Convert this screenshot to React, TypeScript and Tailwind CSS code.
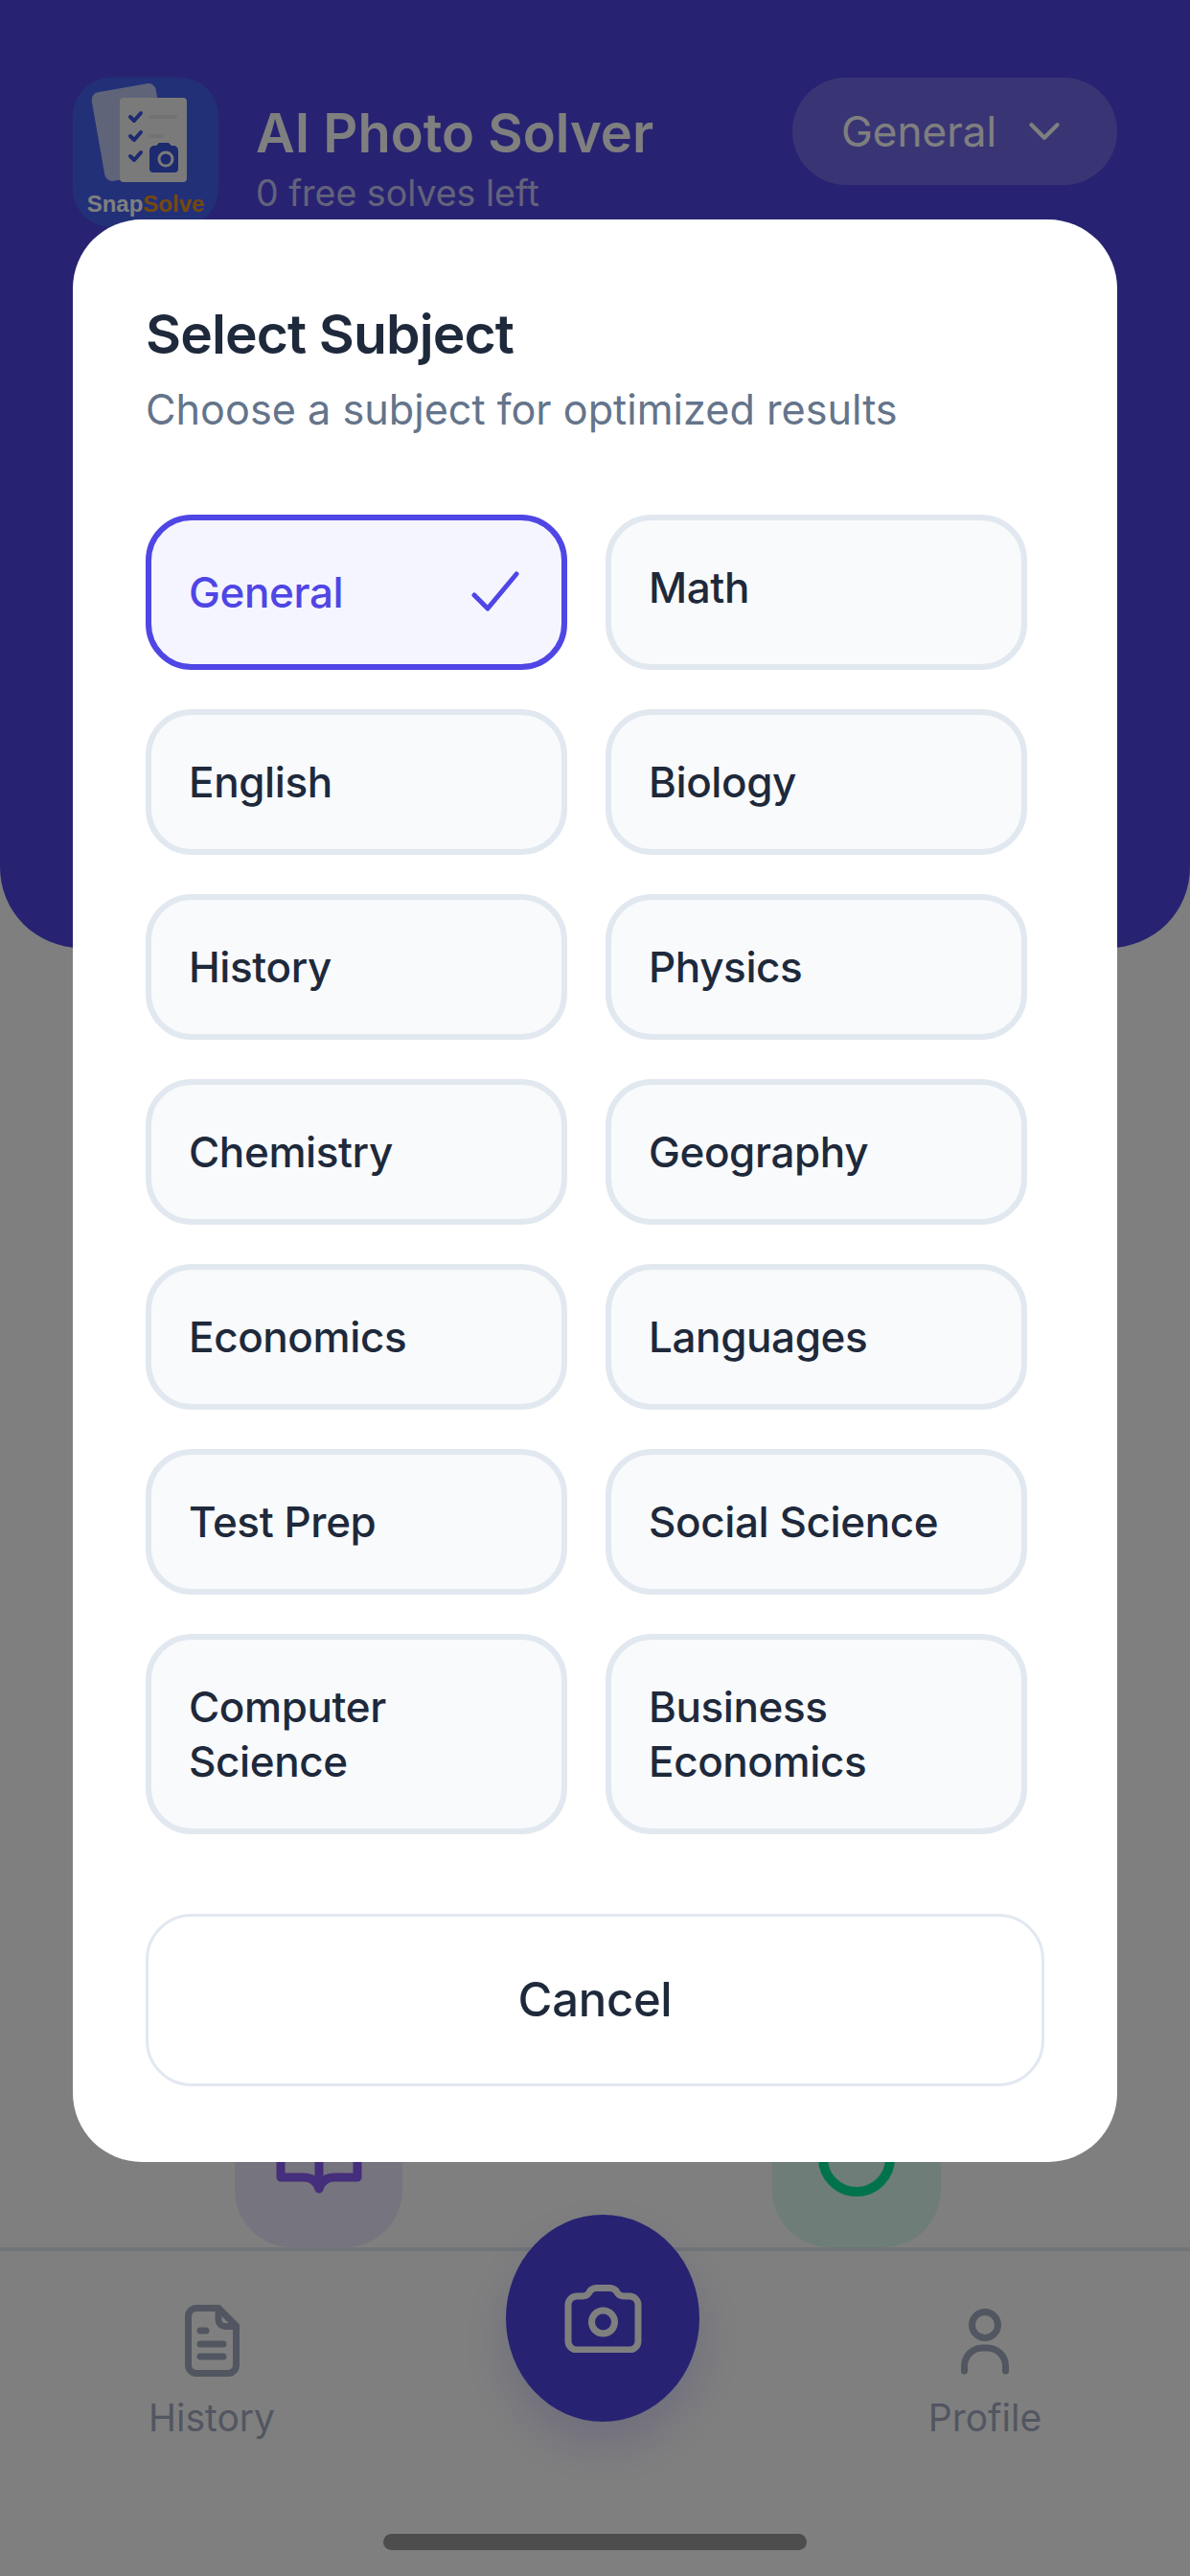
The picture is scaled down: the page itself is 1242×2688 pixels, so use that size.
import { ChevronDown } from 'lucide-react';

const subjects = [
  'General',
  'Math',
  'English',
  'Biology',
  'History',
  'Physics',
  'Chemistry',
  'Geography',
  'Economics',
  'Languages',
  'Test Prep',
  'Social Science',
  'Computer Science',
  'Business Economics',
];

const AppLogo = () => (
  <div className="relative h-[156px] w-[152px] overflow-hidden rounded-[40px] bg-[#4460f0]">
    <svg width="152" height="118" viewBox="0 0 152 118" className="block">
      <rect x="26" y="10" width="68" height="94" rx="8" fill="#f1f1f4" fillOpacity="0.72" transform="rotate(-10 60 57)" />
      <rect x="49" y="21" width="70" height="88" rx="4" fill="#f4f4f4" />
      <g fill="none" stroke="#3b55e0" strokeWidth="4" strokeLinecap="round" strokeLinejoin="round">
        <path d="M60 41l4 4 7-8" />
        <path d="M60 61l4 4 7-8" />
        <path d="M60 82l4 4 7-8" />
      </g>
      <rect x="79" y="39" width="30" height="4" rx="2" fill="#e4e4e4" />
      <rect x="79" y="59" width="16" height="4" rx="2" fill="#e4e4e4" />
      <path d="M86 74a5 5 0 0 1 5-5h2l3-3h10l3 3h2a5 5 0 0 1 5 5v19a4 4 0 0 1-4 4H90a4 4 0 0 1-4-4z" fill="#3b55e0" transform="translate(-6 2)" />
      <circle cx="97" cy="85" r="7" fill="none" stroke="#f4f4f4" strokeWidth="3" />
    </svg>
    <div className="text-center font-['Liberation_Sans',sans-serif] text-[24px] leading-[28px] font-bold text-white">
      Snap<span className="text-[#e8931a]">Solve</span>
    </div>
  </div>
);

const SubjectButton = ({ name, selected }: { name: string; selected: boolean }) => (
  <button
    className={`flex items-start justify-between rounded-[48px] border-[6px] py-[41.5px] pr-[40px] pl-[39px] text-left text-[44px] leading-[57px] font-[450] tracking-[-0.4px] ${
      selected ? 'border-[#4f46e5] bg-[#f5f5ff] text-[#4f46e5]' : 'border-[#e2e8f0] bg-[#f8fafc] text-[#1e293b]'
    }`}
  >
    <span className={selected ? 'self-center' : ''}>{name}</span>
    {selected && (
      <svg width="66" height="67" viewBox="0 0 66 67" fill="none" stroke="#4f46e5" strokeWidth="5" strokeLinecap="round" strokeLinejoin="round">
        <path d="M15 36l14 14L59 14" />
      </svg>
    )}
  </button>
);

export default function App() {
  return (
    <div className="relative flex h-[2688px] w-[1242px] flex-col overflow-hidden bg-white font-['Inter',sans-serif]">
      {/* page behind the dialog */}
      <header className="flex h-[989px] shrink-0 items-start justify-between rounded-b-[84px] bg-[#4f46e5] px-[76px] pt-[81px]">
        <div className="flex gap-[39px]">
          <AppLogo />
          <div>
            <h1 className="mt-[20px] text-[56px] leading-[76px] font-semibold text-white">AI Photo Solver</h1>
            <p className="mt-[1px] text-[37.5px] leading-[48px] text-white/70">0 free solves left</p>
          </div>
        </div>
        <div className="flex h-[112px] w-[339px] items-center gap-[23px] rounded-[56px] bg-white/20 pl-[51px] text-[44px] font-normal text-white">
          General
          <ChevronDown size={54} strokeWidth={1.9} />
        </div>
      </header>

      <main className="flex flex-1 items-end">
        <div className="ml-[245px] flex h-[175px] w-[175px] justify-center rounded-[60px] bg-[#ede9fe]">
          <svg width="96" height="100" viewBox="0 0 96 100" fill="none" stroke="#8b5cf6" strokeWidth="9" strokeLinecap="round" strokeLinejoin="round" className="mt-[22px]">
            <path d="M8 8v72h24q12 0 16 12q4-12 16-12h24V8H64q-12 0-16 12q-4-12-16-12zM48 20v72" />
          </svg>
        </div>
        <div className="ml-[386px] flex h-[175px] w-[176px] justify-center rounded-[60px] bg-[#dcfaf0]">
          <svg width="90" height="90" viewBox="0 0 90 90" fill="none" stroke="#00e69a" strokeWidth="10" strokeLinecap="round" className="mt-[37px]">
            <circle cx="45" cy="45" r="35" />
          </svg>
        </div>
      </main>

      <nav className="flex h-[343px] shrink-0 items-start border-t-[4px] border-[#e2e8f0] bg-white">
        <div className="mt-[56px] ml-[120px] flex w-[202px] flex-col items-center">
          <svg width="57" height="75" viewBox="0 0 57 75" fill="none" stroke="#a3adc2" strokeWidth="7" strokeLinecap="round" strokeLinejoin="round">
            <path d="M35 3.5H12a8.5 8.5 0 0 0-8.500 8.500v51a8.500 8.500 0 0 0 8.500 8.500h33a8.500 8.500 0 0 0 8.500-8.500V22z" />
            <path d="M35 3.500v12a7 7 0 0 0 7 7h11.500" />
            <path d="M16 27h6M16 41h24M16 54h24" />
          </svg>
          <span className="mt-[19px] text-[39px] leading-[48px] text-[#a3adc2]">History</span>
        </div>

        <button className="relative mt-[-38px] ml-[206px] flex h-[216px] w-[202px] items-center justify-center rounded-[50%] bg-[#4f46e5] shadow-[0_24px_50px_rgba(79,70,229,0.2)]">
          <svg width="81" height="71" viewBox="0 0 81 71" fill="none" stroke="#ffffff" strokeWidth="7" strokeLinecap="round" strokeLinejoin="round">
            <path d="M4 21a9 9 0 0 1 9-9h6q5 0 7-4t7-4.500h15q5 .5 7 4.500t7 4h6a9 9 0 0 1 9 9v38a9 9 0 0 1-9 9H13a9 9 0 0 1-9-9z" />
            <circle cx="40.500" cy="39" r="12" />
          </svg>
        </button>

        <div className="mt-[56px] ml-[197px] flex w-[202px] flex-col items-center">
          <svg width="50" height="70" viewBox="0 0 50 70" fill="none" stroke="#a3adc2" strokeWidth="7" strokeLinecap="round" strokeLinejoin="round" className="mt-[4px]">
            <circle cx="25" cy="17" r="13.500" />
            <path d="M3.500 65v-5a19 19 0 0 1 19-19h5a19 19 0 0 1 19 19v5" />
          </svg>
          <span className="mt-[20px] text-[39px] leading-[48px] text-[#a3adc2]">Profile</span>
        </div>
      </nav>

      <div className="absolute bottom-[27px] left-[400px] h-[17px] w-[442px] rounded-full bg-[#9a9a9a]" />

      {/* subject dialog */}
      <div className="absolute inset-0 flex items-start justify-center bg-black/50 pt-[229px]">
        <div className="w-[1090px] rounded-[72px] bg-white px-[76px] pt-[82px] pb-[79px]">
          <h2 className="text-[57px] leading-[76px] font-semibold tracking-[-0.9px] text-[#1e293b]">Select Subject</h2>
          <p className="mt-[12px] text-[43.2px] leading-[56px] text-[#64748b]">Choose a subject for optimized results</p>
          <div className="mt-[82px] grid grid-cols-[440px_440px] gap-x-[40px] gap-y-[41px]">
            {subjects.map((name) => (
              <SubjectButton key={name} name={name} selected={name === 'General'} />
            ))}
          </div>
          <button className="mt-[83px] h-[180px] w-full rounded-[48px] border-[3px] border-[#e2e8f0] bg-white text-[49px] font-[450] tracking-[-0.3px] text-[#1e293b]">
            Cancel
          </button>
        </div>
      </div>
    </div>
  );
}
